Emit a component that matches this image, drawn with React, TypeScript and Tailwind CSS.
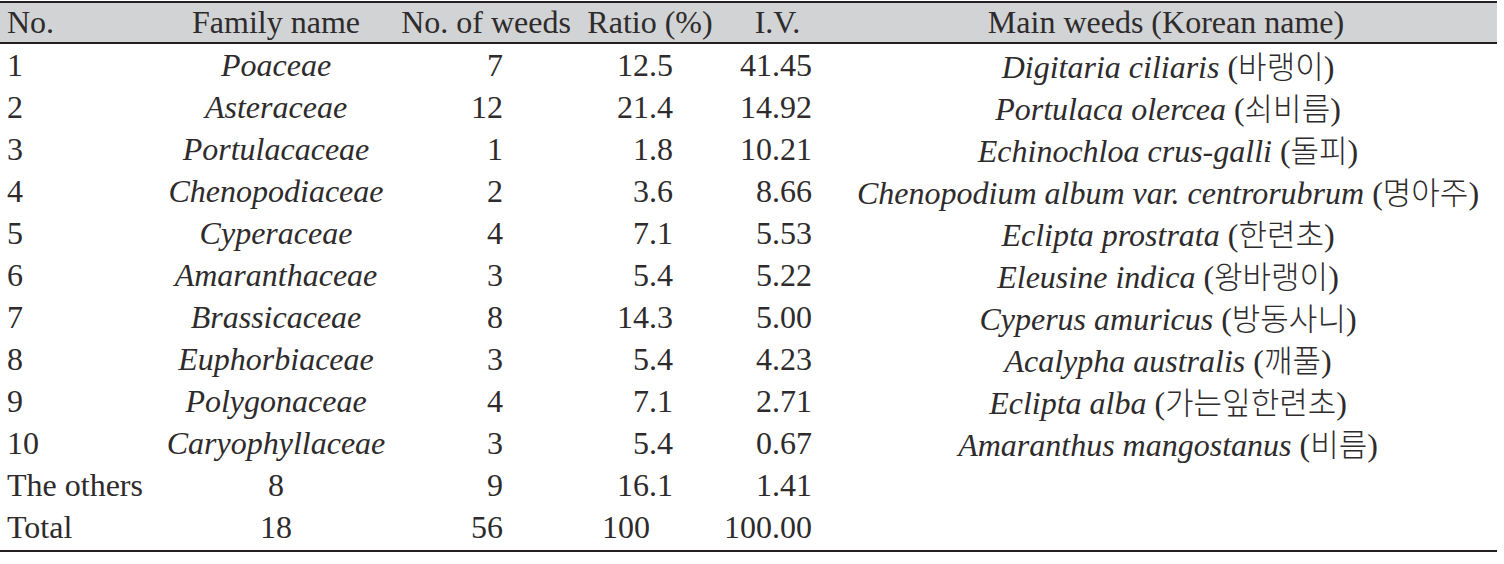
import React from 'react';

type Row = {
  no: string;
  family: string;
  italic: boolean;
  weeds: string;
  ratio: string;
  iv: string;
  latin?: string;
  korean?: string;
};

const rows: Row[] = [
  { no: '1', family: 'Poaceae', italic: true, weeds: '7', ratio: '12.5', iv: '41.45', latin: 'Digitaria ciliaris', korean: '바랭이' },
  { no: '2', family: 'Asteraceae', italic: true, weeds: '12', ratio: '21.4', iv: '14.92', latin: 'Portulaca olercea', korean: '쇠비름' },
  { no: '3', family: 'Portulacaceae', italic: true, weeds: '1', ratio: '1.8', iv: '10.21', latin: 'Echinochloa crus-galli', korean: '돌피' },
  { no: '4', family: 'Chenopodiaceae', italic: true, weeds: '2', ratio: '3.6', iv: '8.66', latin: 'Chenopodium album var. centrorubrum', korean: '명아주' },
  { no: '5', family: 'Cyperaceae', italic: true, weeds: '4', ratio: '7.1', iv: '5.53', latin: 'Eclipta prostrata', korean: '한련초' },
  { no: '6', family: 'Amaranthaceae', italic: true, weeds: '3', ratio: '5.4', iv: '5.22', latin: 'Eleusine indica', korean: '왕바랭이' },
  { no: '7', family: 'Brassicaceae', italic: true, weeds: '8', ratio: '14.3', iv: '5.00', latin: 'Cyperus amuricus', korean: '방동사니' },
  { no: '8', family: 'Euphorbiaceae', italic: true, weeds: '3', ratio: '5.4', iv: '4.23', latin: 'Acalypha australis', korean: '깨풀' },
  { no: '9', family: 'Polygonaceae', italic: true, weeds: '4', ratio: '7.1', iv: '2.71', latin: 'Eclipta alba', korean: '가는잎한련초' },
  { no: '10', family: 'Caryophyllaceae', italic: true, weeds: '3', ratio: '5.4', iv: '0.67', latin: 'Amaranthus mangostanus', korean: '비름' },
  { no: 'The others', family: '8', italic: false, weeds: '9', ratio: '16.1', iv: '1.41' },
  { no: 'Total', family: '18', italic: false, weeds: '56', ratio: '100', iv: '100.00' },
];

// column template shared by header and body
const cols = 'grid grid-cols-[160px_232px_188px_140px_115px_662px]';

const WeedTable: React.FC = () => {
  return (
    <div className="w-[1497px] pt-px text-[32px] text-[#2e2b2c] font-['Liberation_Serif','Times_New_Roman',serif]">
      <div className="border-t-2 border-b-2 border-[#231f20] bg-[#d1d3d4]">
        <div className={`${cols} h-[39px] leading-[39px]`}>
          <div className="pl-[7px]">No.</div>
          <div className="text-center">Family name</div>
          <div className="text-center">No. of weeds</div>
          <div className="text-center">Ratio (%)</div>
          <div className="text-center">I.V.</div>
          <div className="text-center">Main weeds (Korean name)</div>
        </div>
      </div>

      <div className="border-b-2 border-[#231f20] pb-[2px]">
        {rows.map((r) => (
          <div key={r.no} className={`${cols} h-[42px] leading-[42px] whitespace-nowrap`}>
            <div className="pl-[7px]">{r.no}</div>
            <div className={r.italic ? 'text-center italic' : 'text-center'}>{r.family}</div>
            <div className="text-right pr-[77px]">{r.weeds}</div>
            <div className={r.ratio.includes('.') ? 'text-right pr-[47px]' : 'text-right pr-[70px]'}>{r.ratio}</div>
            <div className="text-right pr-[23px]">{r.iv}</div>
            <div className="text-center pl-[4px]">
              {r.latin && (
                <>
                  <span className="italic">{r.latin}</span>{' '}
                  <span>
                    (
                    <span className="font-['Noto_Sans_CJK_KR',sans-serif] font-light text-[31px]">{r.korean}</span>
                    )
                  </span>
                </>
              )}
            </div>
          </div>
        ))}
      </div>
    </div>
  );
};

export default function App() {
  return (
    <div className="w-[1504px] h-[564px] bg-white overflow-hidden">
      <WeedTable />
    </div>
  );
}
